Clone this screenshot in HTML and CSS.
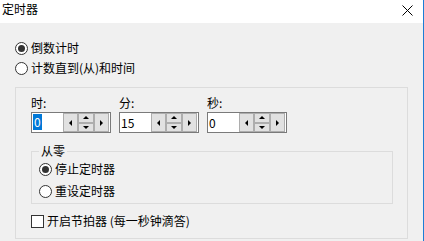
FILE: index.html
```html
<html>
  <head>
<link rel="stylesheet" href="styles.css">
  </head>
  <body>
    <div class="window">
      <div class="titleBar">
        <span class="title">定时器</span>
        <svg class="closeIcon" width="11" height="11" viewBox="0 0 11 11">
          <path d="M0.5 0.5 L10.5 10.5 M10.5 0.5 L0.5 10.5" stroke="#000" stroke-width="1" fill="none"/>
        </svg>
      </div>
      <div class="content">
        <div class="option"><span class="radio checked"></span>倒数计时</div>
        <div class="option"><span class="radio"></span>计数直到(从)和时间</div>
        <div class="groupBox">
          <div class="fields">
            <div class="field">
              <div class="fieldLabel">时:</div>
              <div class="spinInput">
                <span class="value"><span class="selected">0</span></span>
                <span class="spinBtn"><span class="arrowLeft"></span></span>
                <span class="spinPair">
                  <span class="spinHalf"><span class="arrowUp"></span></span>
                  <span class="spinHalf"><span class="arrowDown"></span></span>
                </span>
                <span class="spinBtn"><span class="arrowRight"></span></span>
              </div>
            </div>
            <div class="field">
              <div class="fieldLabel">分:</div>
              <div class="spinInput">
                <span class="value">15</span>
                <span class="spinBtn"><span class="arrowLeft"></span></span>
                <span class="spinPair">
                  <span class="spinHalf"><span class="arrowUp"></span></span>
                  <span class="spinHalf"><span class="arrowDown"></span></span>
                </span>
                <span class="spinBtn"><span class="arrowRight"></span></span>
              </div>
            </div>
            <div class="field">
              <div class="fieldLabel">秒:</div>
              <div class="spinInput">
                <span class="value">0</span>
                <span class="spinBtn"><span class="arrowLeft"></span></span>
                <span class="spinPair">
                  <span class="spinHalf"><span class="arrowUp"></span></span>
                  <span class="spinHalf"><span class="arrowDown"></span></span>
                </span>
                <span class="spinBtn"><span class="arrowRight"></span></span>
              </div>
            </div>
          </div>
          <fieldset class="zeroGroup">
            <legend>从零</legend>
            <div class="option tall"><span class="radio checked"></span>停止定时器</div>
            <div class="option tall"><span class="radio"></span>重设定时器</div>
          </fieldset>
          <div class="option check"><span class="checkbox"></span>开启节拍器 (每一秒钟滴答)</div>
        </div>
      </div>
    </div>
  </body>
</html>
```

FILE: styles.css
```css
body {
  margin: 0;
  background-color: #f0f0f0;
  font-family: "Noto Sans CJK SC", "Noto Sans", sans-serif;
  font-size: 12px;
  color: #000;
}

.window {
  width: 423px;
  height: 241px;
  border-right: solid 1px #1c7ed6;
  overflow: hidden;
}

.titleBar {
  display: flex;
  justify-content: space-between;
  align-items: flex-start;
  height: 23px;
  background-color: white;
  box-sizing: border-box;
  padding: 1px 0 0 2px;
}

.title {
  line-height: 16px;
}

.closeIcon {
  margin: 4px 10px 0 0;
}

.content {
  padding: 15px 0 0 15px;
}

.option {
  display: flex;
  align-items: center;
  height: 20px;
  line-height: 16px;
}

.option.tall {
  height: 22px;
}

.radio {
  position: relative;
  width: 13px;
  height: 13px;
  margin-right: 3px;
  box-sizing: border-box;
  border: solid 1px #333;
  border-radius: 50%;
  background-color: white;
}

.radio.checked::after {
  content: "";
  position: absolute;
  left: 2px;
  top: 2px;
  width: 7px;
  height: 7px;
  border-radius: 50%;
  background-color: #333;
}

.checkbox {
  width: 13px;
  height: 13px;
  margin-right: 3px;
  box-sizing: border-box;
  border: solid 1px #333;
  background-color: white;
}

.groupBox {
  width: 393px;
  height: 152px;
  margin-top: 9px;
  box-sizing: border-box;
  border: solid 1px #dcdcdc;
  padding: 7px 0 0 15px;
}

.fields {
  display: flex;
  gap: 8px;
}

.fieldLabel {
  height: 16px;
  line-height: 16px;
}

.spinInput {
  display: flex;
  width: 80px;
  height: 21px;
  margin-top: 1px;
  box-sizing: border-box;
  border: solid 1px #7a7a7a;
  background-color: white;
  padding: 0 1px 0 0;
}

.value {
  flex: 1;
  padding-left: 1px;
  line-height: 19px;
  font-size: 12px;
}

.selected {
  display: inline-block;
  padding: 0 1px;
  background-color: #0078d7;
  color: white;
  line-height: 16px;
  margin-top: 1px;
}

.spinBtn,
.spinHalf {
  display: flex;
  align-items: center;
  justify-content: center;
  box-sizing: border-box;
  border: solid 1px #adadad;
  background-color: #e1e1e1;
}

.spinBtn {
  width: 15px;
}

.spinPair {
  display: flex;
  flex-direction: column;
  width: 16px;
}

.spinHalf {
  flex: 1;
}

.arrowLeft,
.arrowRight,
.arrowUp,
.arrowDown {
  width: 0;
  height: 0;
}

.arrowLeft {
  border-top: solid 3px transparent;
  border-bottom: solid 3px transparent;
  border-right: solid 3px #000;
}

.arrowRight {
  border-top: solid 3px transparent;
  border-bottom: solid 3px transparent;
  border-left: solid 3px #000;
}

.arrowUp {
  border-left: solid 3px transparent;
  border-right: solid 3px transparent;
  border-bottom: solid 3px #000;
}

.arrowDown {
  border-left: solid 3px transparent;
  border-right: solid 3px transparent;
  border-top: solid 3px #000;
}

.zeroGroup {
  width: 362px;
  margin: 11px 0 0 0;
  padding: 0 0 1px 7px;
  box-sizing: border-box;
  border: solid 1px #dcdcdc;
}

.zeroGroup legend {
  padding: 0 2px;
  margin-left: 0;
  line-height: 14px;
}

.check {
  margin-top: 7px;
}
```
